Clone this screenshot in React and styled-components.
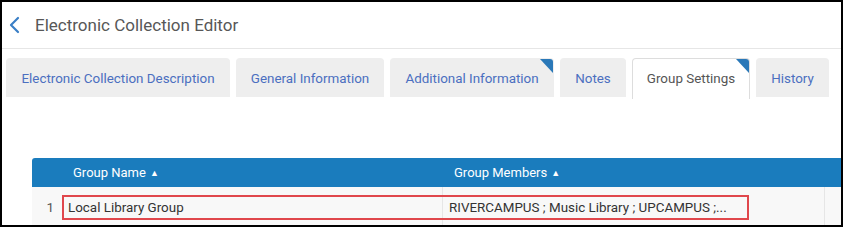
import React from 'react';
import styled, { createGlobalStyle } from 'styled-components';

const GlobalStyle = createGlobalStyle`
  html, body {
    margin: 0;
    padding: 0;
    background: #ffffff;
  }
  body {
    font-family: Roboto, "Liberation Sans", Arial, sans-serif;
  }
`;

const Frame = styled.div`
  width: 843px;
  height: 227px;
  box-sizing: border-box;
  border: 2px solid #000;
  background: #fff;
  overflow: hidden;
`;

const Header = styled.div`
  height: 46px;
  display: flex;
  align-items: center;
  gap: 15px;
  padding-left: 6px;
  border-bottom: 1px solid #e6e6e6;
`;

const BackButton = styled.button`
  border: 0;
  background: none;
  padding: 0;
  display: flex;
  align-items: center;
  cursor: pointer;
`;

const Title = styled.h1`
  margin: 0;
  font-size: 17px;
  font-weight: 400;
  color: #575757;
`;

const TabBar = styled.div`
  display: flex;
  align-items: flex-start;
  gap: 6px;
  margin-top: 9px;
  padding-left: 4px;
`;

const Tab = styled.div`
  position: relative;
  width: ${({ $w }) => $w}px;
  box-sizing: border-box;
  display: flex;
  align-items: center;
  justify-content: center;
  font-size: 13.4px;
  white-space: nowrap;
  border-radius: 4px 4px 0 0;
  overflow: hidden;
  background: ${({ $active }) => ($active ? '#ffffff' : '#eeeeee')};
  color: ${({ $active }) => ($active ? '#555555' : '#4b6fc0')};
  border: 1px solid ${({ $active }) => ($active ? '#dddddd' : '#eeeeee')};
  border-bottom: none;
  height: ${({ $active }) => ($active ? '41px' : '39px')};
  padding-bottom: ${({ $active }) => ($active ? '2px' : '0')};
`;

const CornerMark = styled.span`
  position: absolute;
  top: 0;
  right: 0;
  width: 13px;
  height: 14px;
  background: #2a78b8;
  clip-path: polygon(0 0, 100% 0, 100% 100%);
`;

const TableWrap = styled.div`
  margin: 59px 0 0 30px;
  width: 840px;
`;

const HeadRow = styled.div`
  display: grid;
  grid-template-columns: 30px 381px 382px 1fr;
  height: 29px;
  background: #1a7cbd;
  border-radius: 3px 0 0 0;
  color: #fff;
  font-size: 13px;
  align-items: center;
`;

const HeadCell = styled.div`
  padding-left: 11px;
  display: flex;
  align-items: center;
  gap: 4px;
`;

const SortArrow = styled.span`
  font-size: 9px;
`;

const BodyRow = styled.div`
  position: relative;
  display: grid;
  grid-template-columns: 30px 381px 382px 1fr;
  height: 40px;
  background: #f8f8f8;
  font-size: 13.4px;
  color: #333;
`;

const Cell = styled.div`
  display: flex;
  align-items: center;
  padding-left: 6px;
  border-right: 1px solid #e6e6e6;
  white-space: nowrap;
  overflow: hidden;
`;

const NumCell = styled(Cell)`
  justify-content: flex-end;
  padding: 0 8px 0 0;
  color: #555;
  border-right: none;
`;

const Highlight = styled.div`
  position: absolute;
  left: 30px;
  top: 8px;
  width: 687px;
  height: 25px;
  box-sizing: border-box;
  border: 2px solid #e0474c;
  pointer-events: none;
`;

const tabs = [
  { label: 'Electronic Collection Description', w: 224 },
  { label: 'General Information', w: 148 },
  { label: 'Additional Information', w: 164, marked: true },
  { label: 'Notes', w: 66 },
  { label: 'Group Settings', w: 118, marked: true, active: true },
  { label: 'History', w: 73 },
];

export default function App() {
  return (
    <>
      <GlobalStyle />
      <Frame>
        <Header>
          <BackButton aria-label="Back">
            <svg width="12" height="18" viewBox="0 0 12 18">
              <path d="M10 2 L3 9 L10 16" fill="none" stroke="#3a7fc6" strokeWidth="2.2" strokeLinecap="round" strokeLinejoin="round" />
            </svg>
          </BackButton>
          <Title>Electronic Collection Editor</Title>
        </Header>
        <TabBar>
          {tabs.map((t) => (
            <Tab key={t.label} $w={t.w} $active={t.active}>
              {t.label}
              {t.marked && <CornerMark />}
            </Tab>
          ))}
        </TabBar>
        <TableWrap>
          <HeadRow>
            <div />
            <HeadCell>Group Name <SortArrow>▲</SortArrow></HeadCell>
            <HeadCell>Group Members <SortArrow>▲</SortArrow></HeadCell>
            <div />
          </HeadRow>
          <BodyRow>
            <NumCell>1</NumCell>
            <Cell>Local Library Group</Cell>
            <Cell>RIVERCAMPUS ; Music Library ; UPCAMPUS ;...</Cell>
            <Cell />
            <Highlight />
          </BodyRow>
        </TableWrap>
      </Frame>
    </>
  );
}
